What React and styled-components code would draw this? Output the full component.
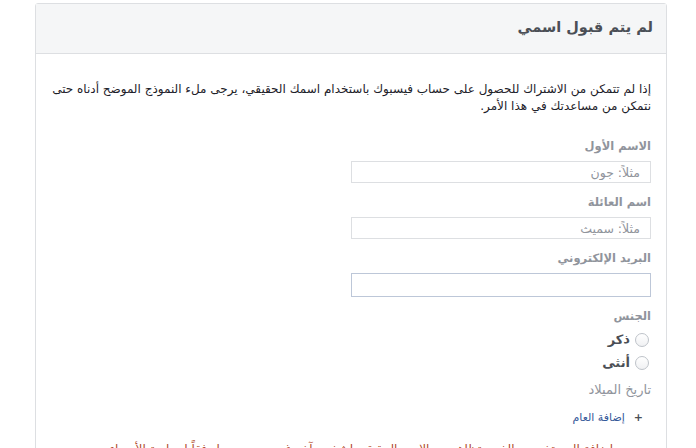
import React from 'react'
import styled, { createGlobalStyle } from 'styled-components'

const GlobalStyle = createGlobalStyle`
    html, body {
        margin: 0;
        padding: 0;
        background: #fff;
        overflow: hidden;
    }
    body {
        font-family: "DejaVu Sans", Tahoma, sans-serif;
        color: #1d2129;
    }
`

const Card = styled.div`
    direction: rtl;
    width: 630px;
    margin: 3px 0 0 35px;
    border: 1px solid #dddfe2;
    border-radius: 3px 3px 0 0;
    background: #fff;
    height: 460px;
`

const Header = styled.div`
    background: #f5f6f7;
    border-bottom: 1px solid #dddfe2;
    height: 50px;
    box-sizing: border-box;
    display: flex;
    align-items: center;
    padding: 0 13px 3px;
`

const Title = styled.h2`
    margin: 0;
    font-size: 14.5px;
    font-weight: bold;
    color: #4b4f56;
`

const Body = styled.div`
    padding: 27px 15px 0 12px;
`

const Intro = styled.p`
    margin: 0 0 22px;
    font-size: 12px;
    line-height: 17px;
    color: #1d2129;
`

const Form = styled.div`
    width: 300px;
    display: flex;
    flex-direction: column;
`

const Label = styled.label`
    font-size: ${({ $big }) => ($big ? '13px' : '11.5px')};
    font-weight: ${({ $big }) => ($big ? 'normal' : 'bold')};
    color: #90949c;
    line-height: 18px;
    margin-bottom: ${({ $gap }) => $gap ?? 6}px;
`

const Input = styled.input`
    direction: rtl;
    box-sizing: border-box;
    width: 300px;
    height: ${({ $tall }) => ($tall ? '24px' : '22px')};
    border: 1px solid ${({ $tall }) => ($tall ? '#bdc7d8' : '#dddfe2')};
    padding: 0 10px;
    font-family: inherit;
    font-size: 12.5px;
    margin-bottom: 10px;
    outline: none;
    &::placeholder {
        color: #90949c;
    }
`

const RadioRow = styled.label`
    display: flex;
    align-items: center;
    gap: 5px;
    height: 23px;
    font-size: 13px;
    font-weight: bold;
    color: #4b4f56;
`

const Radio = styled.span`
    width: 12px;
    height: 12px;
    border-radius: 50%;
    border: 1px solid #bec3c9;
    background: linear-gradient(#fff, #f0f1f3);
    margin-right: 2px;
`

const Spacer = styled.div`
    height: ${({ $h }) => $h}px;
`

const AddLink = styled.a`
    display: flex;
    align-items: center;
    gap: 9px;
    height: 16px;
    font-size: 11px;
    color: #365899;
    text-decoration: none;
    padding-right: 8px;
    margin-top: 2px;
`

const Plus = styled.span`
    font-size: 11px;
    font-weight: bold;
    color: #4b4f56;
`

const Warning = styled.p`
    margin: 16px 0 0;
    padding-right: 38px;
    font-size: 12px;
    line-height: 16px;
    color: #b04a2c;
    white-space: nowrap;
`

const App = () => {
    return (
        <>
            <GlobalStyle />
            <Card>
                <Header>
                    <Title>لم يتم قبول اسمي</Title>
                </Header>
                <Body>
                    <Intro>
                        إذا لم تتمكن من الاشتراك للحصول على حساب فيسبوك باستخدام اسمك الحقيقي، يرجى ملء النموذج الموضح أدناه حتى نتمكن من مساعدتك في هذا الأمر.
                    </Intro>
                    <Form>
                        <Label>الاسم الأول</Label>
                        <Input placeholder="مثلاً: جون" />
                        <Label>اسم العائلة</Label>
                        <Input placeholder="مثلاً: سميث" />
                        <Label>البريد الإلكتروني</Label>
                        <Input $tall />
                        <Label $gap={3}>الجنس</Label>
                        <RadioRow><Radio />ذكر</RadioRow>
                        <RadioRow><Radio />أنثى</RadioRow>
                        <Spacer $h={7} />
                        <Label $big $gap={8}>تاريخ الميلاد</Label>
                        <AddLink href="#0"><Plus>+</Plus>إضافة العام</AddLink>
                    </Form>
                    <Warning>
                        إضافة المستخدمين الذين يتظاهرون بالاسم الحقيقي لشخص آخر غير مسموح بها وفقاً لسياسة الأسماء
                    </Warning>
                </Body>
            </Card>
        </>
    )
}

export default App
